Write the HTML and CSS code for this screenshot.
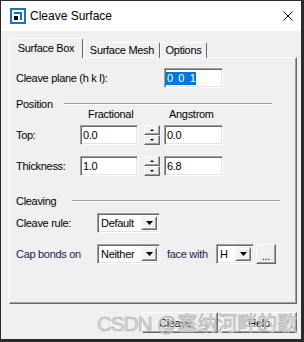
FILE: index.html
```html
<!DOCTYPE html>
<html lang="en">
<head>
    <meta charset="UTF-8">
    <title>Cleave Surface</title>
    <link rel="stylesheet" href="styles.css">
</head>
<body>

    <div class="window">
        <!-- TITLE BAR -->
        <div class="titlebar">
            <svg class="app-icon" width="16" height="16" viewBox="0 0 16 16">
                <rect width="16" height="16" fill="#1f6fc5"/>
                <rect x="2" y="2" width="12" height="12" fill="#fff"/>
                <path d="M4 4h8v8h-2V6H4z" fill="#1f6fc5"/>
                <rect x="4" y="8" width="4" height="4" fill="#000"/>
            </svg>
            <span class="title">Cleave Surface</span>
            <svg class="close" width="10" height="10" viewBox="0 0 10 10">
                <path d="M0.5 0.5l9 9M9.5 0.5l-9 9" stroke="#000" stroke-width="1" fill="none"/>
            </svg>
        </div>

        <div class="client">
            <!-- TABS -->
            <div class="tabs">
                <div class="tab active">Surface Box</div>
                <div class="tab mesh">Surface Mesh</div>
                <div class="tab options">Options</div>
            </div>

            <div class="panel">
                <div class="row plane">
                    <span class="label">Cleave plane (h k l):</span>
                    <div class="field wide"><span class="sel">0  0  1</span></div>
                </div>

                <div class="group">
                    <span class="group-label pos">Position</span>
                    <span class="rule"></span>
                </div>

                <div class="colhead">
                    <span class="h-frac">Fractional</span>
                    <span class="h-ang">Angstrom</span>
                </div>

                <div class="row top">
                    <span class="label short">Top:</span>
                    <div class="field">0.0</div>
                    <div class="spin">
                        <span><i class="up"></i></span>
                        <span><i class="down"></i></span>
                    </div>
                    <div class="field wide">0.0</div>
                </div>

                <div class="row thick">
                    <span class="label short">Thickness:</span>
                    <div class="field">1.0</div>
                    <div class="spin">
                        <span><i class="up"></i></span>
                        <span><i class="down"></i></span>
                    </div>
                    <div class="field wide">6.8</div>
                </div>

                <div class="group cleaving">
                    <span class="group-label clv">Cleaving</span>
                    <span class="rule"></span>
                </div>

                <div class="row rule-row">
                    <span class="label mid">Cleave rule:</span>
                    <div class="combo">
                        <span class="val">Default</span>
                        <span class="drop"><svg width="7" height="4" viewBox="0 0 7 4"><path d="M0 0h7L3.5 4z"/></svg></span>
                    </div>
                </div>

                <div class="row cap">
                    <span class="label mid navy">Cap bonds on</span>
                    <div class="combo">
                        <span class="val">Neither</span>
                        <span class="drop"><svg width="7" height="4" viewBox="0 0 7 4"><path d="M0 0h7L3.5 4z"/></svg></span>
                    </div>
                    <span class="face navy">face with</span>
                    <div class="combo small">
                        <span class="val">H</span>
                        <span class="drop"><svg width="7" height="4" viewBox="0 0 7 4"><path d="M0 0h7L3.5 4z"/></svg></span>
                    </div>
                    <div class="btn dots">...</div>
                </div>
            </div>

            <!-- BUTTONS -->
            <div class="buttons">
                <div class="btn cleave">
                    <span>Cleave</span>
                    <svg width="7" height="4" viewBox="0 0 7 4"><path d="M0 0h7L3.5 4z"/></svg>
                </div>
                <div class="btn help">Help</div>
            </div>
        </div>

        <div class="watermark"><span class="wm-latin">CSDN</span> @塞纳河畔的歌</div>
    </div>

</body>
</html>
```

FILE: styles.css
```css
* {
    box-sizing: border-box;
}

html, body {
    margin: 0;
    padding: 0;
}

body {
    width: 304px;
    height: 342px;
    overflow: hidden;
    background-color: #2b2b2b;
    font-family: "Liberation Sans", Arial, sans-serif;
    font-size: 11px;
    letter-spacing: -0.3px;
    color: #000;
}

/* WINDOW */
.window {
    position: relative;
    width: 304px;
    height: 342px;
    border: 1px solid #2b2b2b;
    border-right-width: 3px;
    border-bottom-width: 3px;
    background-color: #f0f0f0;
}

.titlebar {
    display: flex;
    align-items: center;
    height: 30px;
    padding: 0 8px 0 9px;
    background-color: #fff;
}

.title {
    margin-left: 4px;
    font-size: 12px;
    letter-spacing: 0;
}

.close {
    margin-left: auto;
}

/* TABS */
.client {
    padding: 7px 0 0 8px;
}

.tabs {
    position: relative;
    z-index: 1;
    display: flex;
    align-items: flex-end;
    height: 20px;
    margin-bottom: -1px;
}

.tab {
    height: 16px;
    border: 1px solid;
    border-color: #fff #696969 transparent #fff;
    border-bottom: none;
    border-radius: 2px 2px 0 0;
    text-align: center;
    line-height: 15px;
}

.tab.active {
    width: 74px;
    height: 20px;
    line-height: 19px;
    background-color: #f0f0f0;
}

.tab.mesh {
    width: 76px;
    margin-left: 1px;
}

.tab.options {
    width: 47px;
}

/* PANEL */
.panel {
    width: 288px;
    height: 247px;
    padding: 10px 0 0 6px;
    border: 1px solid;
    border-color: #fff #696969 #696969 #fff;
    box-shadow: inset -1px -1px 0 #a0a0a0;
}

.row {
    display: flex;
    align-items: center;
    height: 20px;
}

.label {
    width: 148px;
    flex: none;
}

.label.short {
    width: 64px;
}

.label.mid {
    width: 81px;
}

.navy {
    color: #1c1c52;
}

.group {
    display: flex;
    align-items: center;
    height: 12px;
    margin-top: 10px;
    line-height: 12px;
}

.group-label.pos {
    width: 48px;
}

.group-label.clv {
    width: 56px;
}

.rule {
    width: 208px;
    border-top: 1px solid #a0a0a0;
    border-bottom: 1px solid #fff;
}

.group.cleaving {
    margin-top: 19px;
}

.colhead {
    display: flex;
    height: 12px;
    margin-top: -2px;
    line-height: 12px;
}

.h-frac {
    width: 81px;
    margin-left: 72px;
}

.row.top {
    margin-top: 5px;
}

.row.thick {
    margin-top: 11px;
}

.row.rule-row {
    margin-top: 6px;
}

.row.cap {
    margin-top: 11px;
}

/* CONTROLS */
.field {
    width: 58px;
    height: 20px;
    padding-left: 2px;
    border: 1px solid;
    border-color: #a0a0a0 #fff #fff #a0a0a0;
    box-shadow: inset 1px 1px 0 #696969, inset -1px -1px 0 #e3e3e3;
    background-color: #fff;
    line-height: 18px;
    white-space: pre;
}

.field.wide {
    width: 59px;
}

.sel {
    display: inline-block;
    margin-left: -1px;
    padding: 0 1px;
    line-height: 13px;
    background-color: #0078d7;
    color: #fff;
}

.spin {
    display: flex;
    flex-direction: column;
    width: 16px;
    height: 20px;
    margin: 0 4px 0 6px;
}

.spin span {
    flex: 1;
    display: flex;
    align-items: center;
    justify-content: center;
    border: 1px solid;
    border-color: #fff #696969 #696969 #fff;
    box-shadow: inset -1px -1px 0 #a0a0a0;
}

.spin i {
    width: 0;
    height: 0;
    border-left: 2px solid transparent;
    border-right: 2px solid transparent;
}

.spin i.up {
    border-bottom: 2px solid #000;
}

.spin i.down {
    border-top: 2px solid #000;
}

.combo {
    display: flex;
    width: 63px;
    height: 20px;
    padding: 2px;
    border: 1px solid;
    border-color: #a0a0a0 #fff #fff #a0a0a0;
    box-shadow: inset 1px 1px 0 #696969, inset -1px -1px 0 #e3e3e3;
    background-color: #fff;
}

.combo .val {
    flex: 1;
    padding-left: 1px;
    line-height: 14px;
}

.combo .drop {
    display: flex;
    align-items: center;
    justify-content: center;
    width: 16px;
    background-color: #f0f0f0;
    border: 1px solid;
    border-color: #f0f0f0 #696969 #696969 #f0f0f0;
    box-shadow: inset 1px 1px 0 #fff, inset -1px -1px 0 #a0a0a0;
}

.combo.small {
    width: 38px;
}

.face {
    width: 49px;
    margin-left: 7px;
}

.btn {
    display: flex;
    align-items: center;
    justify-content: center;
    border: 1px solid;
    border-color: #fff #696969 #696969 #fff;
    box-shadow: inset -1px -1px 0 #a0a0a0;
    background-color: #f0f0f0;
}

.btn.dots {
    width: 20px;
    height: 20px;
    margin-left: 2px;
    padding-top: 3px;
}

/* BOTTOM BUTTONS */
.buttons {
    display: flex;
    justify-content: flex-end;
    gap: 3px;
    width: 288px;
    margin-top: 8px;
}

.buttons .btn {
    width: 76px;
    height: 21px;
}

.btn.cleave {
    justify-content: flex-start;
    padding-left: 16px;
}

.btn.cleave svg {
    margin-left: 24px;
}

/* WATERMARK */
.watermark {
    position: absolute;
    left: 96px;
    top: 310px;
    font-family: "Liberation Sans", "Noto Sans CJK SC", sans-serif;
    font-size: 20px;
    letter-spacing: 0;
    line-height: 26px;
    white-space: nowrap;
    color: rgba(215, 215, 215, 0.85);
    -webkit-text-stroke: 0.5px #a8a8a8;
}

.wm-latin {
    font-size: 21px;
    letter-spacing: -1.3px;
}
```
